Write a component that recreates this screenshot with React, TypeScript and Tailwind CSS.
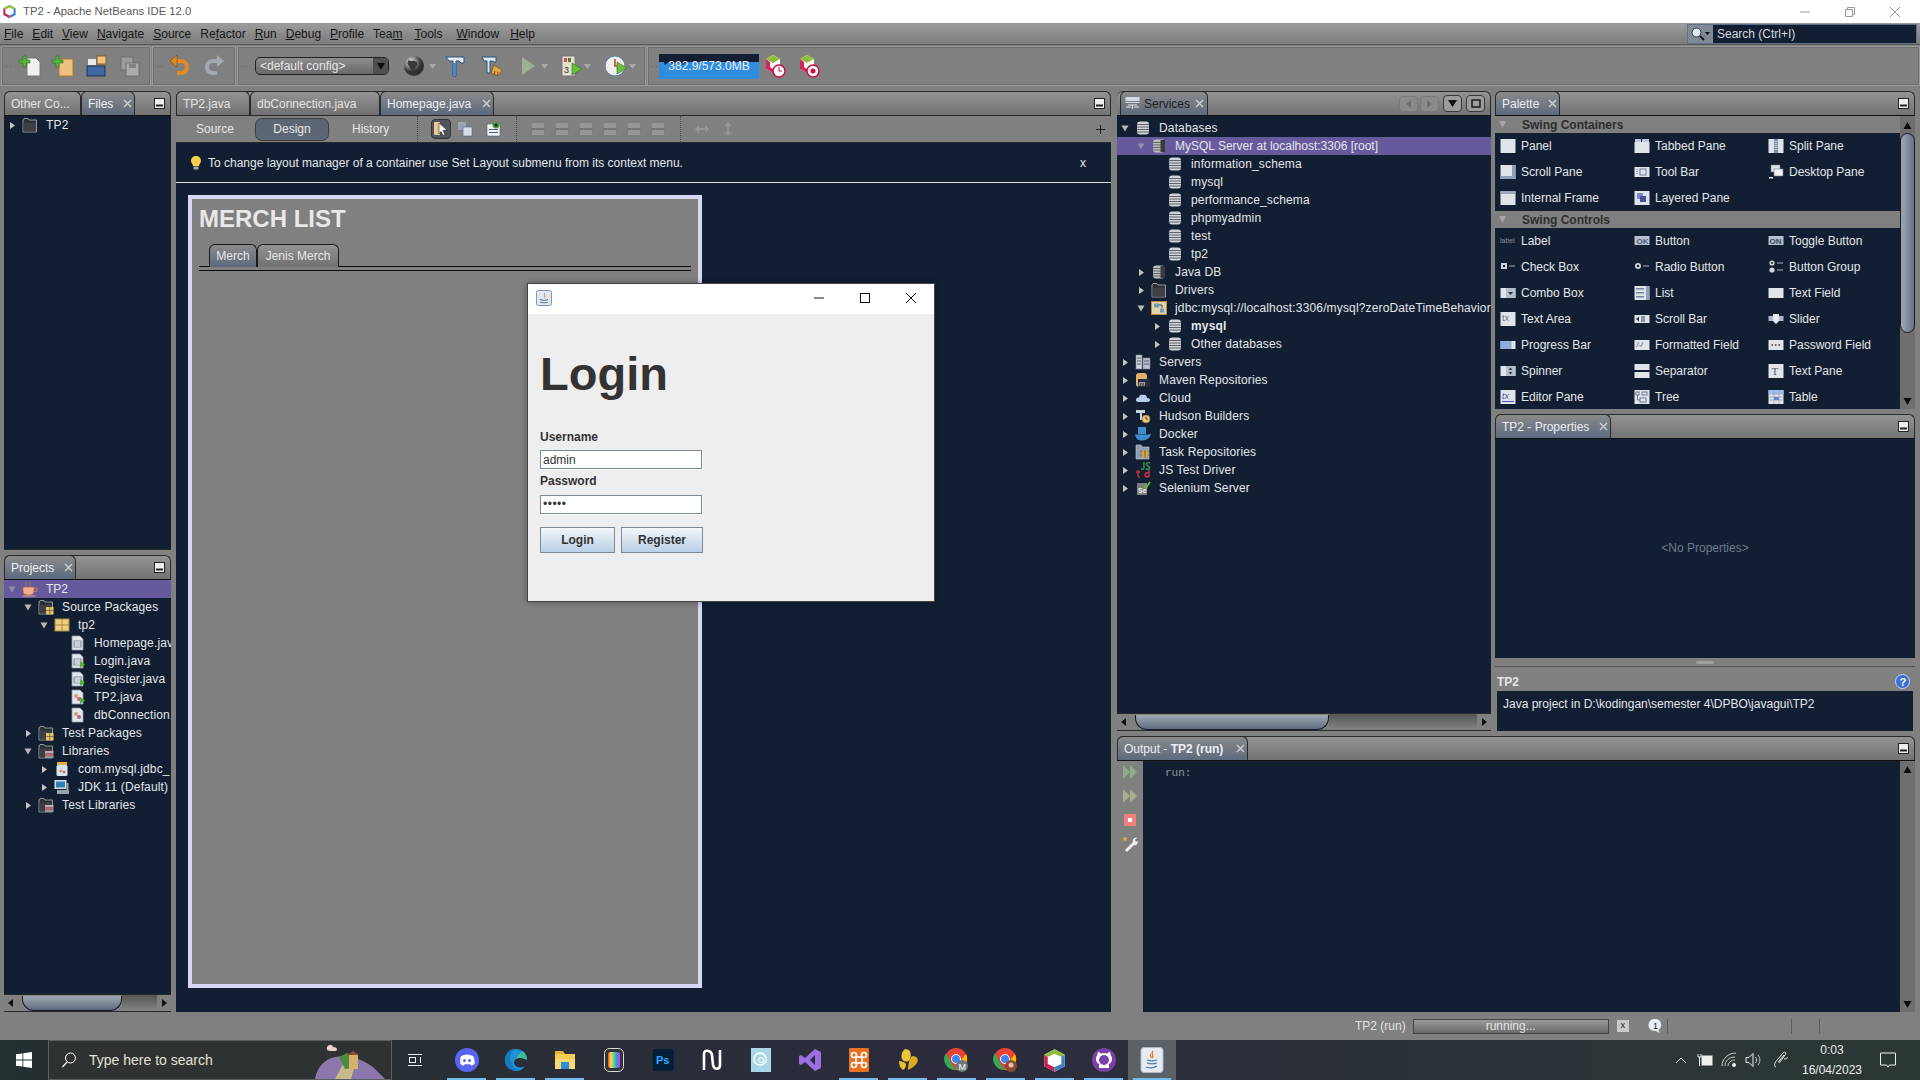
import React from "react";

const cx = (...a: (string | false | undefined)[]) => a.filter(Boolean).join(" ");

const Arrow = ({ open, dim }: { open?: boolean; dim?: boolean }) => (
  <svg width="9" height="9" viewBox="0 0 9 9" className="shrink-0">
    {open ? <path d="M0.5 1.5h7l-3.5 6z" fill={dim ? "#8f8fa8" : "#b8b8b8"} /> : <path d="M2 1l5 3.5-5 3.5z" fill="#c4c4c4" />}
  </svg>
);

const I = ({ children, s = 16 }: { children: React.ReactNode; s?: number }) => (
  <svg width={s} height={s} viewBox="0 0 16 16" className="shrink-0">{children}</svg>
);

const Db = ({ dark }: { dark?: boolean }) => (
  <I>
    <rect x="2" y="1.500" width="12" height="13" rx="3" fill={dark ? "#bdbdbd" : "#cfd2d8"} />
    {[4, 6.500, 9, 11.500].map((y) => <rect key={y} x="2" y={y} width="12" height="1" fill="#5f6470" />)}
    {dark && <rect x="9.500" y="2" width="4.500" height="12" fill="#3a3a3a" />}
  </I>
);
const DarkFolder = ({ badge }: { badge?: "pkg" | "lib" }) => (
  <I>
    <path d="M1 3l1-1.500h4L7 3h7.500v12H1z" fill="#2b2e35" stroke="#b5b5b5" strokeWidth="0.8" />
    <rect x="1.500" y="5.500" width="12.500" height="9" fill="#3c3f46" />
    {badge === "pkg" && <g><rect x="8" y="8" width="7.500" height="7.500" fill="#e3c56d" /><path d="M8 11.500h7.500M11.700 8v7.500" stroke="#7c6222" strokeWidth="0.8" /></g>}
    {badge === "lib" && <g><rect x="7" y="8" width="8.500" height="2.400" fill="#c9a5b5" /><rect x="7" y="10.500" width="8.500" height="2.400" fill="#b06a78" /><rect x="7" y="13" width="8.500" height="2" fill="#999" /></g>}
  </I>
);
const Pkg = () => <I><rect x="1" y="2" width="14" height="12" fill="#eccf82" stroke="#a98a3b" /><path d="M1 8h14M8 2v12" stroke="#a98a3b" /></I>;
const JFile = ({ run, cls }: { run?: boolean; cls?: boolean }) => (
  <I>
    <path d="M2 1h8l3 3v11H2z" fill="#dfe6ef" stroke="#8d97a5" strokeWidth="0.8" />
    {cls ? <g><circle cx="6" cy="7" r="2" fill="#d9a06d" /><circle cx="9" cy="10" r="2" fill="#c85f6b" /></g>
      : <g><rect x="4" y="6" width="7" height="6" fill="#fff" stroke="#51627e" strokeWidth="0.7" /><path d="M4 8h7M4 10h7" stroke="#51627e" strokeWidth="0.6" /></g>}
    {run && <path d="M10 8l5 3.500-5 3.500z" fill="#57b23b" />}
  </I>
);
const Cup = () => (
  <I>
    <path d="M1 6h11v4c0 3-2 4-5.500 4S1 13 1 10z" fill="#eeb08a" stroke="#b5593b" strokeWidth="0.7" />
    <path d="M12 7h1.500c1.800 0 1.800 3.500 0 3.500H12" fill="none" stroke="#d07a58" strokeWidth="1.200" />
    <path d="M0.500 15h13" stroke="#e3a888" />
    <path d="M4.500 1c-1 1 1 2 0 3.500M8 0.500c-1 1 1 2 0 4" stroke="#9d7a6c" fill="none" />
  </I>
);
const Jar = () => <I><rect x="3" y="1" width="10" height="3" fill="#e0b04a" /><rect x="2.500" y="4" width="11" height="11" rx="1.500" fill="#d8e2ee" /><circle cx="7" cy="10" r="1.600" fill="#d99565" /><circle cx="10" cy="11" r="1.300" fill="#c96b6b" /></I>;
const Jdk = () => <I><rect x="0.500" y="1" width="12" height="9" fill="#d6dbe2" /><rect x="2" y="2.500" width="9" height="6" fill="#2d7fb8" /><rect x="3" y="11" width="12" height="4" fill="#9ba3ad" /><path d="M13.500 4v7" stroke="#9ba3ad" strokeWidth="2" /></I>;
const Conn = () => <I><rect x="0.500" y="1.500" width="15" height="13" fill="#e6d4a8" stroke="#b08e44" /><rect x="3" y="3.500" width="5" height="4" fill="#6e9bc9" /><rect x="9" y="8.500" width="4" height="4" fill="#6e9bc9" /><path d="M8 5h3v3" stroke="#33465e" fill="none" /></I>;
const Servers = () => <I><rect x="1" y="1" width="6" height="14" fill="#cfd6e2" stroke="#77808f" strokeWidth="0.6" /><rect x="8" y="4" width="7" height="11" fill="#b9c0cb" stroke="#77808f" strokeWidth="0.6" /><path d="M2 4h4M2 7h4M2 10h4M9 7h5M9 10h5" stroke="#4d5668" /></I>;
const Maven = () => <I><rect x="1" y="1" width="11" height="14" rx="3" fill="#e3b06a" /><rect x="3" y="7" width="12" height="8" fill="#272c3a" /><text x="3.500" y="14" fontSize="8" fontStyle="italic" fill="#e6e6e6" fontFamily="Liberation Sans">m</text></I>;
const Cloud = () => <I><path d="M1 10c0-2 2-3 3-2 0-3 2-4 4-3 2-1 4 1 4 3 2 0 3 1 3 2s-1 2-3 2H3c-1 0-2-1-2-2z" fill="#b9cfee" /></I>;
const Hudson = () => <I><path d="M1 2h9v3H7v7H5V5H1z" fill="#c8d3e0" /><circle cx="11" cy="11" r="4" fill="#e9c879" stroke="#85663a" strokeWidth="0.6" /><path d="M11 8.500V11h2" stroke="#5d4626" fill="none" /></I>;
const Docker = () => <I><rect x="3" y="1" width="4" height="4" fill="#3d8dd0" /><rect x="7" y="1" width="4" height="4" fill="#3d8dd0" /><rect x="3" y="5" width="4" height="3" fill="#3d8dd0" /><rect x="7" y="5" width="4" height="3" fill="#3d8dd0" /><path d="M0 8.500h13c1 0 2-1 3-1-.5 4-4 7-9 7-4 0-6-2-7-6z" fill="#3d8dd0" /></I>;
const Task = () => <I><path d="M1 1h5l1 2h7v12H1z" fill="#8f9eb0" stroke="#c9ced5" strokeWidth="0.6" /><ellipse cx="10" cy="10" rx="3" ry="4" fill="#d9a53f" /><path d="M7 8l-2-1M7 11H5M13 8l2-1M13 11h2M10 6v8" stroke="#5e4715" strokeWidth="0.7" /></I>;
const JsT = () => <I><path d="M9 0v6c0 1-1 1.500-3 1M15 1c-2-1-4 0-3.500 1.500S15 4 14.500 6 12 7.500 11 7" stroke="#2e9c4b" strokeWidth="1.400" fill="none" /><path d="M3 8v6c0 1 1 1 2 1M1 10h4M14 8v7M14 11c-3-1-4 .5-4 2s1 2 4 1.500" stroke="#d9303c" strokeWidth="1.400" fill="none" /></I>;
const Sel = () => <I><path d="M2 3h10v12H2z" fill="#7e7e7e" /><path d="M9 6l2 2 4-6" stroke="#63ba3d" strokeWidth="1.800" fill="none" /><text x="3" y="13" fontSize="7" fontWeight="700" fill="#eee" fontFamily="Liberation Sans">Se</text></I>;

const Row = ({ lvl, arrow, icon, label, sel, bold }: { lvl: 0 | 1 | 2 | 3; arrow?: "o" | "c"; icon: React.ReactNode; label: string; sel?: boolean; bold?: boolean }) => (
  <div className={cx("flex items-center h-[18px] whitespace-nowrap", ["pl-[4px]", "pl-[20px]", "pl-[36px]", "pl-[52px]"][lvl], sel && "bg-[#665a9c]")}>
    <span className="w-[14px] shrink-0 flex">{arrow && <Arrow open={arrow === "o"} dim={sel} />}</span>
    {icon}
    <span className={cx("ml-[8px] text-[12px] text-[#e4e6ea]", bold && "font-bold", !sel && "tracking-[0.15px]")}>{label}</span>
  </div>
);

const Tab = ({ label, active, close, w }: { label: React.ReactNode; active?: boolean; close?: boolean; w: string }) => (
  <div className={cx("h-[24px] flex items-center justify-between pl-[6px] pr-[2px] rounded-t-[6px] border-x border-t border-[#2a2a2a] text-[12px] whitespace-nowrap shrink-0", w,
    active ? "bg-gradient-to-b from-[#8a8a8a] to-[#5c6a7e] text-[#eceff3]" : "bg-gradient-to-b from-[#939393] to-[#717171] text-[#e2e2e2]")}>
    <span>{label}</span>
    {close && <svg width="9" height="9" viewBox="0 0 9 9"><path d="M1 1l7 7M8 1L1 8" stroke="#d0d0d0" strokeWidth="1.400" /></svg>}
  </div>
);

const MinBtn = () => <svg width="11" height="11" viewBox="0 0 11 11" className="shrink-0"><rect x="0.500" y="0.500" width="10" height="10" fill="#eee" stroke="#222" /><rect x="2" y="6.500" width="7" height="2" fill="#222" /></svg>;

const TabBar = ({ children, right }: { children: React.ReactNode; right?: React.ReactNode }) => (
  <div className="h-[24px] flex items-end shrink-0 rounded-t-[6px] border-r border-t border-[#2a2a2a] bg-gradient-to-b from-[#939393] to-[#737373] relative">
    {children}
    <div className="flex-1" />
    <div className="flex items-center h-full pr-[5px]">{right}</div>
  </div>
);

const ScrollH = ({ w }: { w: string }) => (
  <div className="h-[18px] shrink-0 bg-[#808080] flex items-center border-t border-[#2a2a2a] border-b">
    <svg width="10" height="10" viewBox="0 0 10 10" className="ml-[2px] shrink-0"><path d="M7 1v8L2 5z" fill="#111" /></svg>
    <div className={cx("ml-[6px] h-[15px] rounded-b-[12px] border border-t-0 border-[#15181f] bg-gradient-to-b from-[#a1a8b2] to-[#5f6c80] shrink-0", w)} />
    <div className="flex-1 h-full bg-gradient-to-b from-[#555] to-[#858585]" />
    <svg width="10" height="10" viewBox="0 0 10 10" className="mx-[2px] shrink-0"><path d="M3 1v8l5-4z" fill="#111" /></svg>
  </div>
);

const paletteIcon = (k: string) => {
  const base = "#dfe3ea", line = "#6e7d96";
  const box = <rect x="0.500" y="1" width="15" height="14" fill={base} />;
  switch (k) {
    case "Panel": return <I>{box}</I>;
    case "Tabbed Pane": return <I><rect x="0.500" y="4" width="15" height="11" fill={base} /><rect x="1" y="1" width="6" height="3" fill="#bcc6d6" /><rect x="8" y="1" width="7" height="3" fill="#bcc6d6" /></I>;
    case "Split Pane": return <I>{box}<rect x="6" y="1" width="4" height="14" fill="#7f93b5" /><path d="M8 3v10" stroke="#fff" strokeDasharray="1 1" /></I>;
    case "Scroll Pane": return <I>{box}<rect x="12" y="1" width="3.500" height="14" fill="#8ea0bc" /><rect x="0.500" y="12" width="15" height="3" fill="#8ea0bc" /></I>;
    case "Tool Bar": return <I><rect x="0.500" y="3" width="15" height="10" fill={base} /><rect x="6" y="5" width="6" height="6" fill="none" stroke={line} /><path d="M3 5v6" stroke={line} strokeDasharray="1 1" /></I>;
    case "Desktop Pane": return <I><rect x="3" y="1" width="9" height="7" fill={base} stroke={line} strokeWidth="0.6" /><rect x="6" y="5" width="9" height="7" fill="#f2f2f2" stroke={line} strokeWidth="0.6" /><rect x="1" y="13" width="4" height="1.500" fill={base} /></I>;
    case "Internal Frame": return <I>{box}<rect x="0.500" y="1" width="15" height="3" fill="#9aa7bc" /></I>;
    case "Layered Pane": return <I>{box}<rect x="3" y="3" width="6" height="6" fill="#7f88c4" /><rect x="6" y="6" width="6" height="6" fill="#4d4f9c" /></I>;
    case "Label": return <I><text x="0" y="10" fontSize="7" fill="#8d93a0" fontFamily="Liberation Sans">label</text></I>;
    case "Button": return <I><rect x="0.500" y="3" width="15" height="9" fill="#b6c0d0" /><text x="2.500" y="11" fontSize="8" fontWeight="700" fill="#4d5a70" fontFamily="Liberation Sans">OK</text></I>;
    case "Toggle Button": return <I><rect x="0.500" y="3" width="15" height="9" fill="#b6c0d0" /><text x="1.500" y="11" fontSize="8" fontWeight="700" fill="#36445c" fontFamily="Liberation Sans">ON</text></I>;
    case "Check Box": return <I><rect x="1" y="4" width="6" height="6" fill="#cdd3dc" /><rect x="3" y="6" width="2" height="2" fill="#222" /><path d="M9 7h6" stroke="#aab2c0" /></I>;
    case "Radio Button": return <I><circle cx="4" cy="7" r="3" fill="#cdd3dc" /><circle cx="4" cy="7" r="1.200" fill="#222" /><path d="M9 7h6" stroke="#aab2c0" /></I>;
    case "Button Group": return <I><circle cx="4" cy="4" r="2.600" fill="#cdd3dc" /><circle cx="4" cy="4" r="1" fill="#222" /><circle cx="4" cy="11" r="2.600" fill="#cdd3dc" /><path d="M9 4h6M9 11h6" stroke="#aab2c0" /></I>;
    case "Combo Box": return <I><rect x="0.500" y="3" width="15" height="10" fill={base} /><rect x="6" y="3" width="9.500" height="10" fill="#b3bdcc" /><path d="M8 7h5l-2.500 3z" fill="#333" /></I>;
    case "List": return <I>{box}<rect x="2" y="3" width="8" height="1.500" fill="#7587a4" /><rect x="2" y="7" width="8" height="1.500" fill="#7587a4" /><rect x="2" y="11" width="8" height="1.500" fill="#7587a4" /><rect x="12" y="1" width="3" height="14" fill="#8ea0bc" /></I>;
    case "Text Field": return <I><rect x="0.500" y="3" width="15" height="10" fill={base} /></I>;
    case "Text Area": return <I>{box}<text x="2" y="10" fontSize="9" fill="#66758c" fontFamily="Liberation Sans">tx</text></I>;
    case "Scroll Bar": return <I><rect x="0.500" y="4" width="15" height="8" fill={base} /><path d="M5 5.500v5l-3-2.500z" fill="#334" /><rect x="7" y="5" width="4" height="6" fill="#8494ae" /></I>;
    case "Slider": return <I><rect x="0.500" y="5" width="15" height="5" fill="#aebacb" /><path d="M5 3h6v7l-3 3-3-3z" fill="#e8ecf2" /></I>;
    case "Progress Bar": return <I><rect x="0.500" y="4" width="15" height="8" fill={base} /><rect x="0.500" y="4" width="11" height="8" fill="#8eaed8" /></I>;
    case "Formatted Field": return <I><rect x="0.500" y="3" width="15" height="10" fill={base} /><text x="2.500" y="10" fontSize="7" fontStyle="italic" fill="#445" fontFamily="Liberation Sans">/-/</text></I>;
    case "Password Field": return <I><rect x="0.500" y="3" width="15" height="10" fill={base} /><path d="M3.500 8H5M7 8h1.500M10.500 8H12" stroke="#333" strokeWidth="1.500" /></I>;
    case "Spinner": return <I><rect x="0.500" y="3" width="15" height="10" fill={base} /><rect x="6" y="3" width="9.500" height="10" fill="#b3bdcc" /><path d="M8.500 7l2-2.500 2 2.500zM8.500 9l2 2.500 2-2.500z" fill="#333" /></I>;
    case "Separator": return <I><rect x="0.500" y="1" width="15" height="6" fill={base} /><rect x="0.500" y="9" width="15" height="6" fill={base} /></I>;
    case "Text Pane": return <I>{box}<text x="3.500" y="12" fontSize="11" fontFamily="Liberation Serif" fill="#4c5a70">T</text></I>;
    case "Editor Pane": return <I>{box}<text x="2" y="10" fontSize="9" fontStyle="italic" fill="#4d56a8" fontFamily="Liberation Sans">tx</text><path d="M2 12.500h12" stroke="#4d56a8" /></I>;
    case "Tree": return <I>{box}<rect x="2" y="3" width="3" height="3" fill="none" stroke={line} /><rect x="8" y="3" width="5" height="3" fill="none" stroke={line} /><rect x="6" y="9" width="6" height="4" fill="none" stroke={line} /><path d="M3.500 6v5H6" stroke={line} fill="none" /></I>;
    case "Table": return <I>{box}<rect x="0.500" y="1" width="15" height="4" fill="#a8c0e8" /><rect x="6" y="8" width="5" height="3" fill="#5a86d0" /><path d="M0.500 5h15M0.500 8h15M0.500 11h15M6 1v14M11 1v14" stroke="#7f95ba" strokeWidth="0.6" /></I>;
  }
  return null;
};

const PalItem = ({ n }: { n: string }) => (
  <div className="h-[26px] flex items-center">
    <span className="ml-[5px]">{paletteIcon(n)}</span>
    <span className="ml-[5px] text-[12px] text-[#e4e6ea] whitespace-nowrap">{n}</span>
  </div>
);

const PalHead = ({ t }: { t: string }) => (
  <div className="h-[17px] bg-[#808080] flex items-center pl-[3px]">
    <svg width="9" height="9" viewBox="0 0 9 9"><path d="M1 1h7L4.500 8z" fill="#a5a5a5" /></svg>
    <span className="ml-[15px] text-[12px] font-bold text-[#2e2e2e]">{t}</span>
  </div>
);

const Div = () => <div className="w-px h-[26px] border-l border-dotted border-[#4a4a4a]" />;

const Grip = () => <span className="text-[#5a5a5a] text-[9px] leading-none ml-[3px] mr-[3px] tracking-[1px]">··</span>;

const ToolGroup = ({ w, children }: { w: string; children: React.ReactNode }) => (
  <div className={cx("h-[40px] border border-[#9a9a9a] shadow-[inset_0_0_0_1px_#6f6f6f] flex items-center shrink-0", w)}>{children}</div>
);

const Big = ({ children }: { children: React.ReactNode }) => <svg width="24" height="24" viewBox="0 0 24 24" className="shrink-0">{children}</svg>;

const Drop = () => <svg width="7" height="5" viewBox="0 0 7 5" className="shrink-0"><path d="M0 0h7L3.500 5z" fill="#a8a8a8" /></svg>;

const NbLogo = ({ s = 22 }: { s?: number }) => (
  <svg width={s} height={s} viewBox="0 0 22 22" className="shrink-0">
    <path d="M11 1l9 5v10l-9 5-9-5V6z" fill="#fff" />
    <path d="M11 1l9 5-3 2-6-3-6 3-3-2z" fill="#8fbe3f" />
    <path d="M20 6v10l-9 5v-4l6-3V8z" fill="#3b82c8" />
    <path d="M2 6v10l9 5v-4l-6-3V8z" fill="#c8204f" />
  </svg>
);

const TBtn = ({ b, children }: { b: string; children: React.ReactNode }) => (
  <div className={cx("h-[40px] flex items-center justify-center shrink-0 relative", b)}>{children}</div>
);

const Underline = () => <span className="absolute left-[5px] right-[5px] bottom-0 h-[2px] bg-[#76b9ed]" />;

export default function App() {
  const menus: [string[], string][] = [[["F","ile"],""],[["E","dit"],""],[["V","iew"],""],[["N","avigate"],""],[["S","ource"],""],[["Re","f","actor"],""],[["R","un"],""],[["D","ebug"],""],[["P","rofile"],""],[["Tea","m",""],""],[["T","ools"],"ml-[3px]"],[["W","indow"],"ml-[5px]"],[["H","elp"],"ml-[2px]"]];
  const s = (a: string[]) => a.length === 2 ? <><u>{a[0]}</u>{a[1]}</> : <>{a[0]}<u>{a[1]}</u>{a[2]}</>;
  return (
    <div className="relative w-[1920px] h-[1080px] overflow-hidden flex flex-col bg-[#808080] font-['Liberation_Sans',sans-serif]">
      {/* Title bar */}
      <div className="h-[23px] bg-white flex items-center shrink-0">
        <span className="ml-[2px]"><NbLogo s={15} /></span>
        <span className="ml-[6px] text-[11.3px] text-[#5a5a5a]">TP2 - Apache NetBeans IDE 12.0</span>
        <div className="flex-1" />
        <svg width="12" height="12" viewBox="0 0 12 12" className="mr-[33px]"><path d="M1 6h10" stroke="#9a9a9a" /></svg>
        <svg width="12" height="12" viewBox="0 0 12 12" className="mr-[33px]"><path d="M1.500 3.500h7v7h-7zM3.500 3.500v-2h7v7h-2" fill="none" stroke="#9a9a9a" /></svg>
        <svg width="12" height="12" viewBox="0 0 12 12" className="mr-[19px]"><path d="M1 1l10 10M11 1L1 11" stroke="#9a9a9a" /></svg>
      </div>
      {/* Menu bar */}
      <div className="h-[22px] shrink-0 flex items-center bg-gradient-to-b from-[#9d9d9d] to-[#7c7c7c] border-b border-[#5a5a5a] text-[12px] text-[#151515] pl-[4px] gap-[9px] relative">
        {menus.map(([m, c], i) => <span key={i} className={c}>{s(m)}</span>)}
        <div className="flex-1" />
        <div className="h-[20px] w-[230px] mr-[3px] border border-[#5f7288] flex">
          <div className="w-[25px] flex items-center bg-[#7f8a96] pl-[2px]">
            <svg width="22" height="16" viewBox="0 0 22 16"><circle cx="6.500" cy="6.500" r="4.500" fill="#dfe9f5" stroke="#333" /><path d="M10 10l4 4" stroke="#111" strokeWidth="2" /><path d="M15 6h5l-2.500 3z" fill="#111" /></svg>
          </div>
          <div className="flex-1 bg-[#121f33] text-[#d5d8de] pl-[4px] flex items-center">Search (Ctrl+I)</div>
        </div>
      </div>
      {/* Toolbar */}
      <div className="h-[41px] shrink-0 flex items-start pt-[1px] gap-[1px] pl-[1px] border-b border-[#9a9a9a]">
        <ToolGroup w="w-[150px]">
          <Grip />
          <div className="flex items-center gap-[9px] ml-[2px]">
            <Big><path d="M9 4h9l4 4v14H9z" fill="#f1f1f1" stroke="#777" /><path d="M5 2h3v4h4v3H8v4H5V9H1V6h4z" fill="#55b93d" stroke="#2e6d20" strokeWidth="0.6" /></Big>
            <Big><path d="M8 5h14v17H8z" fill="#eec07e" stroke="#a97a36" /><path d="M5 2h3v4h4v3H8v4H5V9H1V6h4z" fill="#55b93d" stroke="#2e6d20" strokeWidth="0.6" /></Big>
            <Big><rect x="13" y="2" width="9" height="8" fill="#f1c382" stroke="#7c5b2d" /><rect x="4" y="5" width="8" height="6" fill="#e8e8e8" /><path d="M3 12h18v10H3z" fill="#3d6aa5" stroke="#20344f" /></Big>
            <span className="ml-[1px]"><Big><g opacity="0.55"><rect x="3" y="3" width="12" height="13" fill="#b5b5b5" stroke="#666" /><rect x="8" y="9" width="13" height="13" fill="#d0d0d0" stroke="#666" /><rect x="11" y="10" width="7" height="4" fill="#888" /></g></Big></span>
          </div>
        </ToolGroup>
        <ToolGroup w="w-[84px]">
          <Grip />
          <div className="flex items-center gap-[10px] ml-[1px]">
            <Big><path d="M6 7h7c8 0 8 12 0 12H9" fill="none" stroke="#e08c1e" strokeWidth="4" /><path d="M9 1L2 7l7 6z" fill="#e08c1e" stroke="#6a3d06" strokeWidth="0.5" /></Big>
            <Big><path d="M18 7h-7c-8 0-8 12 0 12h4" fill="none" stroke="#a3a9b0" strokeWidth="4" /><path d="M15 1l7 6-7 6z" fill="#a3a9b0" /></Big>
          </div>
        </ToolGroup>
        <ToolGroup w="w-[409px]">
          <Grip />
          <div className="ml-[3px] w-[134px] h-[18px] rounded-[5px] border border-[#222] bg-gradient-to-b from-[#8f8f8f] to-[#686868] flex items-center pl-[4px] text-[12px] text-[#e6e6e6] relative">
            &lt;default config&gt;
            <span className="absolute right-0 top-0 bottom-0 w-[15px] bg-[#505050] rounded-r-[4px] flex items-center justify-center"><svg width="8" height="7" viewBox="0 0 8 7"><path d="M0 0h8L4 7z" fill="#0c0c0c" /></svg></span>
          </div>
          <div className="flex items-center ml-[14px]">
            <Big><defs><radialGradient id="gl" cx="0.35" cy="0.3"><stop offset="0" stopColor="#f0f0f0" /><stop offset="1" stopColor="#303030" /></radialGradient></defs><circle cx="11" cy="12" r="10" fill="url(#gl)" /><path d="M6 6c3 2 3 0 6 1s3 4 1 6-2 5-4 6c-2-3-1-5-3-7s-2-4 0-6z" fill="#3a3a3a" /></Big>
            <span className="ml-[2px]"><Drop /></span>
            <span className="ml-[8px]"><Big><path d="M2 3h18v6h-3l-2-2h-3v15H9V7H5z" fill="#e6edf5" stroke="#24527e" /><rect x="9" y="9" width="3" height="13" fill="#3b8fd0" /></Big></span>
            <span className="ml-[13px]"><Big><path d="M1 3h14v5h-2l-2-1H9v12H6V7H3z" fill="#dde6ef" stroke="#24527e" /><path d="M13 11l8 5-4 6-7-3z" fill="#e0a53e" stroke="#7c531a" strokeWidth="0.7" /><path d="M14 17l-1 4M17 18l-1 4" stroke="#7c531a" /></Big></span>
            <span className="ml-[11px]"><Big><path d="M6 3l13 9-13 9z" fill="#9eb08f" /></Big></span>
            <span className="ml-[1px]"><Drop /></span>
            <span className="ml-[11px]"><Big><rect x="3" y="2" width="13" height="20" fill="#e6e0cf" stroke="#777" /><rect x="5" y="4" width="3" height="4" fill="#d84a4a" /><rect x="9" y="4" width="3" height="4" fill="#3f7f3f" /><text x="5" y="19" fontSize="9" fontFamily="Liberation Sans" fill="#333">3</text><path d="M13 9l10 6-10 6z" fill="#67bd3e" stroke="#2d6d1a" strokeWidth="0.6" /></Big></span>
            <span className="ml-[1px]"><Drop /></span>
            <span className="ml-[13px]"><Big><circle cx="11" cy="12" r="10" fill="#eee" stroke="#5d7fa8" /><path d="M11 5v7h5" stroke="#c7401d" strokeWidth="1.500" fill="none" /><path d="M13 8l10 6-10 6z" fill="#67bd3e" stroke="#2d6d1a" strokeWidth="0.6" /></Big></span>
            <span className="ml-[1px]"><Drop /></span>
          </div>
        </ToolGroup>
        <ToolGroup w="flex-1">
          <Grip />
          <div className="-ml-[3px] w-[100px] h-[25px] bg-[#2f8de0] relative flex items-center justify-center text-[12px] text-[#e9f1fa] overflow-hidden">
            <div className="absolute left-0 right-0 top-0 h-[8px] bg-[#141f33]" />
            <svg width="30" height="12" viewBox="0 0 30 12" className="absolute left-0 top-[4px]"><path d="M0 4l4-2 2 5 4-3 4 2 6-3 4 4 6-5V0H0z" fill="#141f33" /></svg>
            <span className="relative">382.9/573.0MB</span>
          </div>
          <span className="ml-[4px]"><Big><path d="M10 1l7 4v10l-7 4-7-4V5z" fill="#fff" /><path d="M10 1l7 4-7 4-7-4z" fill="#8fbe3f" /><path d="M3 5v10l7 4v-4L7 13V8z" fill="#d3265a" /><circle cx="16" cy="17" r="6" fill="#fff" stroke="#c9123f" strokeWidth="1.500" /><path d="M16 13v4h3" stroke="#c9123f" fill="none" /></Big></span>
          <span className="ml-[10px]"><Big><path d="M10 1l7 4v10l-7 4-7-4V5z" fill="#fff" /><path d="M10 1l7 4-7 4-7-4z" fill="#8fbe3f" /><path d="M3 5v10l7 4v-4L7 13V8z" fill="#d3265a" /><circle cx="16" cy="17" r="6" fill="#fff" stroke="#c9123f" strokeWidth="1.500" /><circle cx="16" cy="17" r="2.500" fill="#c9123f" /></Big></span>
        </ToolGroup>
      </div>

      {/* Main */}
      <div className="h-[926px] shrink-0 flex pt-[5px] pl-[4px] gap-[5px]">
        {/* Left col */}
        <div className="w-[167px] shrink-0 flex flex-col gap-[5px] h-[921px]">
          <div className="h-[459px] flex flex-col border-b border-[#2a2a2a]">
            <TabBar right={<MinBtn />}>
              <Tab label="Other Co..." w="w-[77px]" />
              <Tab label="Files" close active w="w-[54px]" />
            </TabBar>
            <div className="flex-1 bg-[#121f33] border-t border-[#111] overflow-hidden">
              <Row lvl={0} arrow="c" icon={<DarkFolder />} label="TP2" />
            </div>
          </div>
          <div className="h-[457px] flex flex-col">
            <TabBar right={<MinBtn />}>
              <Tab label="Projects" close active w="w-[72px]" />
            </TabBar>
            <div className="flex-1 bg-[#121f33] border-t border-[#111] overflow-hidden">
              <Row lvl={0} arrow="o" icon={<Cup />} label="TP2" sel />
              <Row lvl={1} arrow="o" icon={<DarkFolder badge="pkg" />} label="Source Packages" />
              <Row lvl={2} arrow="o" icon={<Pkg />} label="tp2" />
              <Row lvl={3} icon={<JFile />} label="Homepage.java" />
              <Row lvl={3} icon={<JFile run />} label="Login.java" />
              <Row lvl={3} icon={<JFile run />} label="Register.java" />
              <Row lvl={3} icon={<JFile run cls />} label="TP2.java" />
              <Row lvl={3} icon={<JFile cls />} label="dbConnection.java" />
              <Row lvl={1} arrow="c" icon={<DarkFolder badge="pkg" />} label="Test Packages" />
              <Row lvl={1} arrow="o" icon={<DarkFolder badge="lib" />} label="Libraries" />
              <Row lvl={2} arrow="c" icon={<Jar />} label="com.mysql.jdbc_" />
              <Row lvl={2} arrow="c" icon={<Jdk />} label="JDK 11 (Default)" />
              <Row lvl={1} arrow="c" icon={<DarkFolder badge="lib" />} label="Test Libraries" />
            </div>
            <ScrollH w="w-[100px]" />
          </div>
        </div>

        {/* Center */}
        <div className="w-[935px] shrink-0 flex flex-col h-[921px]">
          <TabBar right={<MinBtn />}>
            <Tab label="TP2.java" w="w-[74px]" />
            <Tab label="dbConnection.java" w="w-[130px]" />
            <Tab label="Homepage.java" close active w="w-[114px]" />
          </TabBar>
          <div className="h-[28px] shrink-0 flex items-center border-t border-[#2a2a2a] border-b bg-[#808080] text-[12px] text-[#e6e6e6] relative">
            <span className="ml-[20px]">Source</span>
            <span className="ml-[21px] w-[74px] h-[23px] rounded-[7px] border border-[#3f3f3f] bg-[#5d6674] flex items-center justify-center">Design</span>
            <span className="ml-[23px]">History</span>
            <span className="ml-[28px]"><Div /></span>
            <span className="ml-[13px] w-[20px] h-[20px] rounded-[4px] bg-[#50545c] border border-[#333] flex items-center justify-center"><svg width="16" height="16" viewBox="0 0 16 16"><rect x="1" y="1" width="6" height="13" fill="#eac88a" /><path d="M6 2l8 7-4 .5 2 4-2 1-2-4-2 2.500z" fill="#fff" stroke="#222" strokeWidth="0.6" /></svg></span>
            <span className="ml-[6px]"><I><rect x="1" y="1" width="8" height="8" fill="#9aa4b2" /><rect x="6" y="6" width="9" height="9" fill="#d7dde6" stroke="#506079" strokeWidth="0.6" /></I></span>
            <span className="ml-[13px]"><I><rect x="1" y="3" width="13" height="12" fill="#eef1f5" stroke="#506079" strokeWidth="0.6" /><rect x="3" y="8" width="9" height="1" fill="#506079" /><rect x="3" y="11" width="9" height="1" fill="#506079" /><circle cx="10" cy="4" r="3.500" fill="#49a437" /><circle cx="10" cy="4" r="1.500" fill="#111" /></I></span>
            <span className="ml-[14px]"><Div /></span>
            <div className="flex items-center gap-[8px] ml-[13px] opacity-70">
              {["a", "b", "c", "d", "e", "f"].map((k) => (
                <svg key={k} width="16" height="16" viewBox="0 0 16 16"><rect x="2" y="2" width="12" height="5" fill="#a0a0a0" /><rect x="2" y="9" width="12" height="5" fill="#a0a0a0" /><path d="M1 8h14" stroke="#666" /></svg>
              ))}
            </div>
            <span className="ml-[14px]"><Div /></span>
            <div className="flex items-center ml-[13px] opacity-70">
              <svg width="16" height="16" viewBox="0 0 16 16"><path d="M1 8l4-4v3h6V4l4 4-4 4V9H5v3z" fill="#a0a0a0" /></svg>
              <span className="ml-[10px]"><svg width="16" height="16" viewBox="0 0 16 16"><path d="M8 1l4 4H9v6h3l-4 4-4-4h3V5H4z" fill="#a0a0a0" /></svg></span>
            </div>
            <div className="flex-1" />
            <svg width="9" height="9" viewBox="0 0 9 9" className="mr-[6px]"><path d="M4.500 0v9M0 4.500h9" stroke="#222" /></svg>
          </div>
          <div className="flex-1 bg-[#121f33] flex flex-col overflow-hidden">
            <div className="h-[40px] shrink-0 border-b border-[#e0e0e0] flex items-center pl-[14px] pr-[25px] text-[12px] text-[#e4e6ea]">
              <svg width="12" height="16" viewBox="0 0 12 16"><path d="M6 1c3 0 5 2 5 5 0 2-2 3-2 5H3c0-2-2-3-2-5 0-3 2-5 5-5z" fill="#f5d04a" /><rect x="3.500" y="11.500" width="5" height="3" fill="#aaa" /></svg>
              <span className="ml-[6px]">To change layout manager of a container use Set Layout submenu from its context menu.</span>
              <div className="flex-1" />
              <span>x</span>
            </div>
            <div className="ml-[12px] mt-[12px] w-[514px] h-[793px] border-[4px] border-[#d8d8f5] bg-[#808080] px-[7px] pt-[6px] shrink-0">
              <div className="text-[24px] font-bold leading-[28px] text-[#e8e8e8]">MERCH LIST</div>
              <div className="mt-[11px] flex pl-[10px] h-[23px] border-b border-[#0c0c0c]">
                <div className="w-[48px] h-[23px] rounded-t-[6px] border border-b-0 border-[#1a1a1a] bg-gradient-to-b from-[#8a8a8a] to-[#5c6a7e] text-[12px] text-[#e6e6e6] flex items-center justify-center">Merch</div>
                <div className="w-[82px] h-[23px] rounded-t-[6px] border border-b-0 border-[#1a1a1a] bg-gradient-to-b from-[#939393] to-[#717171] text-[12px] text-[#e6e6e6] flex items-center justify-center">Jenis Merch</div>
              </div>
              <div className="mt-[3px] border-t border-[#0c0c0c]" />
            </div>
          </div>
        </div>

        {/* Right */}
        <div className="w-[798px] shrink-0 ml-[1px] flex flex-col gap-[5px] h-[921px]">
          <div className="h-[640px] flex gap-[4px] shrink-0">
            <div className="w-[374px] flex flex-col shrink-0">
              <TabBar right={
                <div className="flex items-center gap-[2px]">
                  <span className="w-[19px] h-[16px] rounded-[4px] bg-[#8a8a8a] border border-[#7a7a7a] flex items-center justify-center"><svg width="7" height="8" viewBox="0 0 7 8"><path d="M6 0v8L1 4z" fill="#6f6f6f" /></svg></span>
                  <span className="w-[19px] h-[16px] rounded-[4px] bg-[#8a8a8a] border border-[#7a7a7a] flex items-center justify-center"><svg width="7" height="8" viewBox="0 0 7 8"><path d="M1 0v8l5-4z" fill="#6f6f6f" /></svg></span>
                  <span className="ml-[2px] w-[19px] h-[17px] rounded-[4px] bg-[#9c9c9c] border border-[#3a3a3a] flex items-center justify-center"><svg width="9" height="7" viewBox="0 0 9 7"><path d="M0 0h9L4.500 7z" fill="#111" /></svg></span>
                  <span className="ml-[2px] w-[19px] h-[17px] rounded-[4px] bg-[#9c9c9c] border border-[#3a3a3a] flex items-center justify-center"><svg width="10" height="9" viewBox="0 0 10 9"><rect x="1" y="1" width="8" height="7" fill="none" stroke="#111" strokeWidth="1.400" /></svg></span>
                </div>
              }>
                <div className="w-[88px] ml-[3px] h-[24px] flex items-center pl-[4px] pr-[3px] rounded-t-[6px] border-x border-t border-[#2a2a2a] bg-gradient-to-b from-[#8a8a8a] to-[#5c6a7e] text-[12px] text-[#1d1d1d] whitespace-nowrap">
                  <svg width="15" height="15" viewBox="0 0 15 15"><rect x="0.500" y="1" width="14" height="4" fill="#d5dbe4" /><rect x="0.500" y="6" width="14" height="1" fill="#d5dbe4" /><path d="M3 9h9M1 11h5M9 11h5M7.500 9v4" stroke="#e6e6e6" /></svg>
                  <span className="ml-[4px] flex-1">Services</span>
                  <svg width="9" height="9" viewBox="0 0 9 9"><path d="M1 1l7 7M8 1L1 8" stroke="#d0d0d0" strokeWidth="1.400" /></svg>
                </div>
              </TabBar>
              <div className="flex-1 bg-[#121f33] border-t border-[#111] pt-[3px] overflow-hidden">
                <Row lvl={0} arrow="o" icon={<Db />} label="Databases" />
                <Row lvl={1} arrow="o" icon={<Db dark />} label="MySQL Server at localhost:3306 [root]" sel />
                {["information_schema", "mysql", "performance_schema", "phpmyadmin", "test", "tp2"].map((n) => <Row key={n} lvl={2} icon={<Db />} label={n} />)}
                <Row lvl={1} arrow="c" icon={<Db dark />} label="Java DB" />
                <Row lvl={1} arrow="c" icon={<DarkFolder />} label="Drivers" />
                <Row lvl={1} arrow="o" icon={<Conn />} label="jdbc:mysql://localhost:3306/mysql?zeroDateTimeBehavior" />
                <Row lvl={2} arrow="c" icon={<Db />} label="mysql" bold />
                <Row lvl={2} arrow="c" icon={<Db />} label="Other databases" />
                <Row lvl={0} arrow="c" icon={<Servers />} label="Servers" />
                <Row lvl={0} arrow="c" icon={<Maven />} label="Maven Repositories" />
                <Row lvl={0} arrow="c" icon={<Cloud />} label="Cloud" />
                <Row lvl={0} arrow="c" icon={<Hudson />} label="Hudson Builders" />
                <Row lvl={0} arrow="c" icon={<Docker />} label="Docker" />
                <Row lvl={0} arrow="c" icon={<Task />} label="Task Repositories" />
                <Row lvl={0} arrow="c" icon={<JsT />} label="JS Test Driver" />
                <Row lvl={0} arrow="c" icon={<Sel />} label="Selenium Server" />
              </div>
              <ScrollH w="w-[194px]" />
            </div>
            <div className="w-[420px] flex flex-col shrink-0">
              <div className="h-[318px] flex flex-col shrink-0">
                <TabBar right={<MinBtn />}>
                  <Tab label="Palette" close active w="w-[65px]" />
                </TabBar>
                <div className="flex-1 flex border-t border-[#111] overflow-hidden">
                  <div className="w-[405px] bg-[#121f33] overflow-hidden">
                    <PalHead t="Swing Containers" />
                    <div className="grid grid-cols-[134px_134px_134px]">
                      {["Panel", "Tabbed Pane", "Split Pane", "Scroll Pane", "Tool Bar", "Desktop Pane", "Internal Frame", "Layered Pane"].map((n) => <PalItem key={n} n={n} />)}
                    </div>
                    <PalHead t="Swing Controls" />
                    <div className="grid grid-cols-[134px_134px_134px]">
                      {["Label", "Button", "Toggle Button", "Check Box", "Radio Button", "Button Group", "Combo Box", "List", "Text Field", "Text Area", "Scroll Bar", "Slider", "Progress Bar", "Formatted Field", "Password Field", "Spinner", "Separator", "Text Pane", "Editor Pane", "Tree", "Table"].map((n) => <PalItem key={n} n={n} />)}
                    </div>
                  </div>
                  <div className="w-[15px] flex flex-col items-center bg-[#6f6f6f]">
                    <svg width="9" height="9" viewBox="0 0 9 9" className="mt-[5px] mb-[3px]"><path d="M4.500 1l4 7h-8z" fill="#0c0c0c" /></svg>
                    <div className="w-full h-[200px] rounded-[8px] border border-[#1a1a1a] bg-gradient-to-r from-[#a0a7b1] to-[#667387]" />
                    <div className="flex-1" />
                    <svg width="9" height="9" viewBox="0 0 9 9" className="mb-[3px]"><path d="M0.500 1h8l-4 7z" fill="#0c0c0c" /></svg>
                  </div>
                </div>
              </div>
              <div className="h-[5px] shrink-0" />
              <TabBar right={<MinBtn />}>
                <Tab label="TP2 - Properties" close active w="w-[116px]" />
              </TabBar>
              <div className="h-[220px] shrink-0 bg-[#121f33] border-t border-[#111] pb-[2px] flex items-center justify-center text-[12px] text-[#6f7b8c]">&lt;No Properties&gt;</div>
              <div className="h-[9px] shrink-0 border-b border-[#555] flex items-center justify-center"><span className="w-[18px] h-[3px] rounded-full bg-[#a0a0a0]" /></div>
              <div className="h-[24px] shrink-0 flex items-center justify-between pl-[2px] pr-[5px] pt-[5px] text-[12px] text-[#e6e6e6] font-bold">
                TP2
                <svg width="15" height="15" viewBox="0 0 15 15"><circle cx="7.500" cy="7.500" r="7" fill="#3a6fd6" stroke="#c7d7f5" /><text x="4.500" y="11.500" fontSize="11" fontWeight="700" fill="#fff" fontFamily="Liberation Sans">?</text></svg>
              </div>
              <div className="flex-1 mx-[2px] bg-[#121f33] pl-[6px] pt-[4px] text-[12px] text-[#e4e6ea] whitespace-nowrap">Java project in D:\kodingan\semester 4\DPBO\javagui\TP2</div>
            </div>
          </div>
          <div className="h-[276px] flex flex-col shrink-0">
            <TabBar right={<MinBtn />}>
              <Tab label={<>Output - <span className="font-bold">TP2 (run)</span></>} close active w="w-[131px]" />
            </TabBar>
            <div className="flex-1 flex border-t border-[#111] overflow-hidden">
              <div className="w-[26px] bg-[#808080] flex flex-col items-center gap-[8px] pt-[3px]">
                <svg width="16" height="16" viewBox="0 0 16 16"><path d="M1 1l7 7-7 7zM8 1l7 7-7 7z" fill="#90ad8b" /></svg>
                <svg width="16" height="16" viewBox="0 0 16 16"><path d="M1 1l7 7-7 7zM8 1l7 7-7 7z" fill="#a7ae8d" /></svg>
                <svg width="16" height="16" viewBox="0 0 16 16"><rect x="2" y="2" width="12" height="12" fill="#f07f7f" /><rect x="6" y="6" width="4" height="4" fill="#fff" /></svg>
                <svg width="16" height="16" viewBox="0 0 16 16"><path d="M3 14l8-8c-1-3 2-5 4-4l-2 2 1 2 2-1c0 3-2 5-4 4l-7 7z" fill="#eee" /><circle cx="3" cy="3" r="2" fill="#e0a53e" /></svg>
              </div>
              <div className="flex-1 bg-[#121f33] pl-[22px] pt-[4px] font-['Liberation_Mono',monospace] text-[11px] text-[#8e939b]">run:</div>
              <div className="w-[15px] flex flex-col items-center bg-[#6f6f6f]">
                <svg width="9" height="9" viewBox="0 0 9 9" className="mt-[4px] mb-[3px]"><path d="M4.500 1l4 7h-8z" fill="#0c0c0c" /></svg>
                <div className="flex-1" />
                <svg width="9" height="9" viewBox="0 0 9 9" className="mb-[3px]"><path d="M0.500 1h8l-4 7z" fill="#0c0c0c" /></svg>
              </div>
            </div>
          </div>
        </div>
      </div>

      {/* Status bar */}
      <div className="h-[28px] shrink-0 flex items-center text-[12px] text-[#e2e2e2] pl-[1355px]">
        <span>TP2 (run)</span>
        <div className="ml-[7px] w-[196px] h-[15px] border border-[#444] bg-gradient-to-b from-[#9a9a9a] to-[#6a6a6a] flex items-center justify-center">running...</div>
        <span className="ml-[8px] w-[12px] h-[12px] bg-[#c9c9c9] text-[#222] text-[9px] leading-[10px] text-center">x</span>
        <span className="ml-[19px]"><svg width="15" height="16" viewBox="0 0 15 16"><path d="M7.500 1a6 6 0 0 1 3 11l1 3-4-2.200a6 6 0 1 1 0-11.800z" fill="#e6edf5" /><text x="5" y="10.500" fontSize="9" fill="#111" fontFamily="Liberation Sans">1</text></svg></span>
        <span className="ml-[4px] w-px h-[15px] bg-[#5c5c5c]" />
        <span className="ml-[123px] w-px h-[15px] bg-[#5c5c5c]" />
        <span className="ml-[27px] w-px h-[15px] bg-[#5c5c5c]" />
      </div>

      {/* Taskbar */}
      <div className="h-[40px] shrink-0 flex items-center bg-gradient-to-r from-[#253030] via-[#2c2c3c] to-[#2b3835] text-white relative">
        <svg width="16" height="16" viewBox="0 0 16 16" className="ml-[16px] shrink-0"><path d="M0 2.300l6.500-.9v6.200H0zM7.300 1.300L16 0v7.600H7.300zM0 8.400h6.500v6.200L0 13.700zM7.300 8.400H16V16l-8.700-1.200z" fill="#fff" /></svg>
        <div className="ml-[16px] w-[344px] h-[40px] bg-[#2e3233] border border-[#5a5e60] flex items-center relative overflow-hidden">
          <svg width="16" height="16" viewBox="0 0 16 16" className="ml-[12px] shrink-0"><circle cx="9.500" cy="6" r="5" fill="none" stroke="#fff" /><path d="M6 10l-4.500 5" stroke="#fff" strokeWidth="1.200" /></svg>
          <span className="ml-[12px] text-[14px] text-[#e7e2d6]">Type here to search</span>
          <svg width="82" height="38" viewBox="0 0 82 38" className="absolute right-0 bottom-0">
            <path d="M6 38c2-12 10-20 20-22 14-3 32 4 40 12l10 10z" fill="#8d78ae" />
            <path d="M26 38l12-22 10 1-6 21z" fill="#c9b98a" />
            <path d="M30 16l8-4 8 4 4 10-14 2z" fill="#4f8a3c" />
            <rect x="40" y="14" width="9" height="14" fill="#d9b06a" />
            <path d="M38 14l6-4 6 4z" fill="#8d4f36" />
            <path d="M18 6c2-3 5-3 6 0 3 0 4 1 4 3 0 1-3 1-6 1-3 0-5-1-4-4z" fill="#e8d2d0" />
          </svg>
        </div>
        <svg width="16" height="16" viewBox="0 0 16 16" className="ml-[15px] shrink-0"><path d="M1 2.500h14M1 13.500h14" stroke="#eee" /><rect x="2.500" y="5.500" width="6" height="5" fill="none" stroke="#eee" /><path d="M13.500 5v6" stroke="#eee" /></svg>
        <div className="ml-[19px] flex items-center">
          <TBtn b="w-[49px]"><svg width="24" height="24" viewBox="0 0 24 24"><circle cx="12" cy="12" r="12" fill="#5865f2" /><path d="M6 8c4-2 8-2 12 0 1.500 3 2 5 1.500 8-1.500 1-2.500 1.500-3.500 1.500l-1-1.500c-2 .5-3 .5-5 0l-1 1.500c-1 0-2-.5-3.500-1.500C5 13 5 11 6 8z" fill="#fff" /><circle cx="9.500" cy="12.500" r="1.500" fill="#5865f2" /><circle cx="14.500" cy="12.500" r="1.500" fill="#5865f2" /></svg><Underline /></TBtn>
          <TBtn b="w-[49px]"><svg width="24" height="24" viewBox="0 0 24 24"><path d="M12 1C5 1 1 6 1 12c0 7 6 11 11 11 4 0 7-2 9-5-5 3-11 1-11-4 0-3 3-4 6-4 4 0 7 2 7 2 0-7-5-11-11-11z" fill="#1f8fd6" /><path d="M1 12C1 6 5 1 12 1c-4 1-7 6-5 13 1 4 4 7 8 8-1 .5-2 1-3 1C7 23 1 19 1 12z" fill="#157ac0" /><path d="M10 14c0-3 3-4 6-4 4 0 7 2 7 2 0-3-1-6-3-8-2-1-6 2-10 10z" fill="#49d17c" opacity="0.7" /></svg><Underline /></TBtn>
          <TBtn b="w-[49px]"><svg width="22" height="20" viewBox="0 0 22 20"><path d="M1 1h8l2 3H1z" fill="#e6b32e" /><rect x="1" y="4" width="20" height="15" fill="#f5cd52" /><rect x="1" y="9" width="20" height="10" fill="#f9d973" /><rect x="7" y="12" width="8" height="7" fill="#2d8ed8" /></svg><Underline /></TBtn>
          <TBtn b="w-[49px]"><svg width="20" height="24" viewBox="0 0 20 24"><defs><linearGradient id="rb" x1="0" y1="0" x2="1" y2="0"><stop offset="0" stopColor="#ff4040" /><stop offset="0.25" stopColor="#ffe040" /><stop offset="0.5" stopColor="#40e080" /><stop offset="0.75" stopColor="#4080ff" /><stop offset="1" stopColor="#e040e0" /></linearGradient></defs><rect x="0.500" y="0.500" width="19" height="23" rx="5" fill="#333" stroke="#ddd" /><rect x="4" y="4" width="12" height="16" rx="2" fill="url(#rb)" /></svg></TBtn>
          <TBtn b="w-[49px]"><svg width="22" height="24" viewBox="0 0 22 24"><rect x="0.500" y="1" width="21" height="22" rx="3" fill="#001e36" /><text x="4" y="16" fontSize="11" fontWeight="700" fill="#31a8ff" fontFamily="Liberation Sans">Ps</text></svg></TBtn>
          <TBtn b="w-[49px]"><svg width="24" height="24" viewBox="0 0 24 24"><path d="M4 22V6c0-5 7-4 8 1l1 10c1 5 7 5 7 0V2" stroke="#fff" strokeWidth="2.600" fill="none" /></svg></TBtn>
          <TBtn b="w-[49px]"><svg width="24" height="24" viewBox="0 0 24 24"><rect x="2" y="0" width="20" height="24" fill="#a9d6e6" /><circle cx="11" cy="11" r="6" fill="none" stroke="#fff" strokeWidth="1.600" /><circle cx="12" cy="12" r="2.500" fill="none" stroke="#fff" /></svg></TBtn>
          <TBtn b="w-[49px]"><svg width="24" height="24" viewBox="0 0 24 24"><path d="M17 1l6 3v16l-6 3L7 14l-4 3-2-1V8l2-1 4 3zM17 7l-5 5 5 5z" fill="#9b6ee3" /></svg></TBtn>
          <TBtn b="w-[49px]"><svg width="24" height="24" viewBox="0 0 24 24"><rect x="2" y="0" width="20" height="24" rx="1" fill="#e8701f" /><rect x="9" y="9" width="6" height="6" fill="none" stroke="#fff" strokeWidth="1.600" /><circle cx="7" cy="7" r="2.500" fill="none" stroke="#fff" strokeWidth="1.600" /><circle cx="17" cy="7" r="2.500" fill="none" stroke="#fff" strokeWidth="1.600" /><circle cx="7" cy="17" r="2.500" fill="none" stroke="#fff" strokeWidth="1.600" /><circle cx="17" cy="17" r="2.500" fill="none" stroke="#fff" strokeWidth="1.600" /></svg><Underline /></TBtn>
          <TBtn b="w-[49px]"><svg width="24" height="24" viewBox="0 0 24 24"><path d="M9 1c5 0 7 4 5 10-1 3-4 3-6 2-4-2-3-9 1-12z" fill="#eac43a" /><path d="M16 8c5 0 7 3 5 7-2 3-5 5-9 7 0-5 1-11 4-14z" fill="#dca922" /><path d="M3 13c2 0 6 1 7 3 0 3-1 5-3 6-3-2-4-5-4-9z" fill="#e5bf2e" /></svg><Underline /></TBtn>
          <TBtn b="w-[49px]"><svg width="26" height="26" viewBox="0 0 26 26"><circle cx="12" cy="12" r="11" fill="#ea4335" /><path d="M2 6l5 10 5 7A11 11 0 0 1 2 6z" fill="#34a853" /><path d="M22 7a11 11 0 0 1-10 16l6-11z" fill="#fbbc05" /><circle cx="12" cy="12" r="4.500" fill="#4285f4" stroke="#fff" /><circle cx="18" cy="19" r="6" fill="#6b7a80" /><text x="14.500" y="22.500" fontSize="9" fill="#fff" fontFamily="Liberation Sans">M</text></svg><Underline /></TBtn>
          <TBtn b="w-[49px]"><svg width="26" height="26" viewBox="0 0 26 26"><circle cx="12" cy="12" r="11" fill="#ea4335" /><path d="M2 6l5 10 5 7A11 11 0 0 1 2 6z" fill="#34a853" /><path d="M22 7a11 11 0 0 1-10 16l6-11z" fill="#fbbc05" /><circle cx="12" cy="12" r="4.500" fill="#4285f4" stroke="#fff" /><circle cx="18" cy="19" r="6" fill="#8a4a36" /><circle cx="18" cy="18" r="2.500" fill="#e8c4a8" /></svg><Underline /></TBtn>
          <TBtn b="w-[49px]"><NbLogo s={25} /><Underline /></TBtn>
          <TBtn b="w-[49px]"><svg width="24" height="24" viewBox="0 0 24 24"><circle cx="12" cy="12" r="12" fill="#7b3fa8" /><path d="M7 20v-4c-2-1-3-3-3-5 0-2 .5-3 1.500-4 0-1 0-2 .5-3 1 0 2 .5 3 1.500 2-.5 4-.5 6 0 1-1 2-1.500 3-1.500.5 1 .5 2 .5 3 1 1 1.500 2 1.500 4 0 2-1 4-3 5v4z" fill="#fff" /><circle cx="12" cy="12" r="5" fill="#7b3fa8" /></svg><Underline /></TBtn>
          <TBtn b="w-[48px] bg-[#5b6165]"><svg width="24" height="26" viewBox="0 0 24 26"><rect x="1" y="0.500" width="22" height="25" rx="3" fill="#e6ebf2" stroke="#aeb9c8" /><path d="M13 4c-3 3 2 4-1 7M11 7c-2 2 1 3 0 4" stroke="#e0762a" fill="none" strokeWidth="1.300" /><path d="M7 13c3 1 7 1 10 0M7 16c3 1 7 1 10 0M6 20c4 1.500 8 1 11-1" stroke="#4d7ca8" fill="none" strokeWidth="1.200" /></svg><Underline /></TBtn>
        </div>
        <div className="flex-1" />
        <svg width="12" height="8" viewBox="0 0 12 8" className="shrink-0"><path d="M1 7l5-5 5 5" stroke="#eee" fill="none" /></svg>
        <svg width="16" height="14" viewBox="0 0 16 14" className="ml-[10px] shrink-0"><rect x="5" y="3" width="10" height="9" fill="#eee" stroke="#eee" /><path d="M1 1v3h3V1M2.500 4v9" stroke="#eee" fill="none" /></svg>
        <svg width="16" height="16" viewBox="0 0 16 16" className="ml-[8px] shrink-0"><path d="M1 14C1 7 7 1 15 1M4 14c0-5 4-9 10-9M7 14c0-3 3-6 7-6" stroke="#ccc" fill="none" /><circle cx="13" cy="13" r="2" fill="#eee" /></svg>
        <svg width="16" height="16" viewBox="0 0 16 16" className="ml-[8px] shrink-0"><path d="M1 5.500h3l4-4v13l-4-4H1z" fill="none" stroke="#eee" /><path d="M10.500 5c1.500 2 1.500 4 0 6M13 3c2.500 3 2.500 7 0 10" stroke="#ccc" fill="none" /></svg>
        <svg width="16" height="18" viewBox="0 0 16 18" className="ml-[12px] shrink-0"><path d="M3 16c-3-1-1-5 2-8l5-6c2-2 4 0 2 2L7 11c-1 1-2 0-1-1l5-6" stroke="#eee" fill="none" /><path d="M11 8c3 0 4-1 3-2" stroke="#eee" fill="none" /></svg>
        <div className="ml-[13px] w-[60px] flex flex-col items-center text-[12px] leading-[20px] text-[#eee] shrink-0">
          <span>0:03</span>
          <span>16/04/2023</span>
        </div>
        <svg width="16" height="16" viewBox="0 0 16 16" className="ml-[18px] mr-[24px] shrink-0"><path d="M0.500 1h15v12h-6l-1.500 2-1.500-2h-6z" fill="none" stroke="#eee" /></svg>
      </div>

      {/* Login dialog */}
      <div className="absolute left-[527px] top-[283px] w-[408px] h-[319px] bg-[#eeeeee] border border-[#444] shadow-[0_0_6px_rgba(0,0,0,0.35)]">
        <div className="h-[30px] bg-white flex items-center pl-[8px] pb-[3px]">
          <svg width="16" height="16" viewBox="0 0 16 16"><rect x="0.500" y="0.500" width="15" height="15" rx="2" fill="#dfe7f0" stroke="#7f95b0" /><path d="M9 3c-2 2 1 2.500-.5 4.500" stroke="#e0762a" fill="none" /><path d="M4 9.500c3 1 6 1 8 0M4 12c3 1 6 1 8 0" stroke="#4d6f96" fill="none" /></svg>
          <div className="flex-1" />
          <svg width="12" height="12" viewBox="0 0 12 12" className="mr-[34px]"><path d="M1 6h10" stroke="#111" /></svg>
          <svg width="12" height="12" viewBox="0 0 12 12" className="mr-[34px]"><rect x="1.500" y="1.500" width="9" height="9" fill="none" stroke="#111" /></svg>
          <svg width="12" height="12" viewBox="0 0 12 12" className="mr-[17px]"><path d="M1 1l10 10M11 1L1 11" stroke="#111" /></svg>
        </div>
        <div className="pl-[12px] pt-[32px]">
          <div className="text-[47px] font-bold leading-[56px] text-[#333]">Login</div>
          <div className="mt-[28px] text-[12px] font-bold leading-[14px] text-[#333]">Username</div>
          <div className="mt-[6px] w-[162px] h-[19px] border border-[#7a8a99] bg-white text-[12px] leading-[19px] pl-[2px] text-[#333] shadow-[1px_1px_0_#fff]">admin</div>
          <div className="mt-[5px] text-[12px] font-bold leading-[14px] text-[#333]">Password</div>
          <div className="mt-[7px] w-[162px] h-[19px] border border-[#7a8a99] bg-white text-[12px] leading-[17px] pl-[2px] text-[#333] tracking-[0.5px] shadow-[1px_1px_0_#fff]">•••••</div>
          <div className="mt-[13px] flex gap-[6px]">
            <div className="w-[75px] h-[26px] border border-[#7a8a99] bg-gradient-to-b from-[#f3f6fa] to-[#b9d0e6] text-[12px] font-bold text-[#333] flex items-center justify-center">Login</div>
            <div className="w-[82px] h-[26px] border border-[#7a8a99] bg-gradient-to-b from-[#f3f6fa] to-[#b9d0e6] text-[12px] font-bold text-[#333] flex items-center justify-center">Register</div>
          </div>
        </div>
      </div>
    </div>
  );
}
